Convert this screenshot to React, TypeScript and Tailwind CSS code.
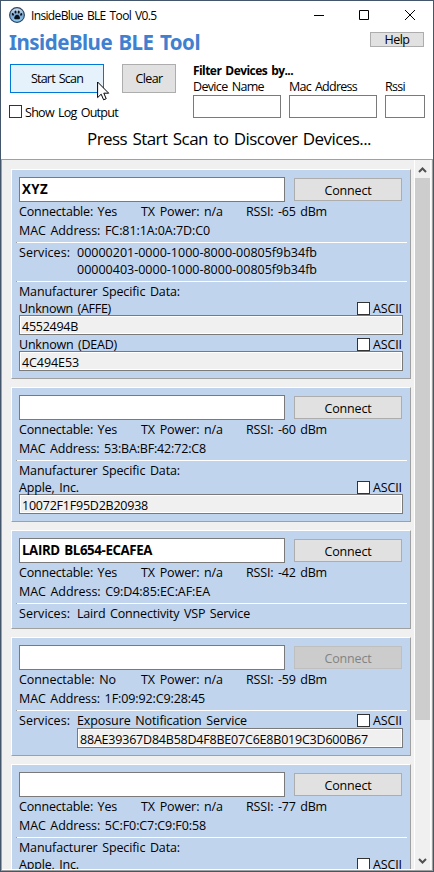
import { useLayoutEffect, useRef, useState } from "react";
import type { ReactNode } from "react";

/** Single line of text tracked so that it spans exactly `w` pixels. */
function Fit({ w, children, className = "" }: { w: number; children: string; className?: string }) {
  const ref = useRef<HTMLSpanElement>(null);
  const [spacing, setSpacing] = useState(0);
  useLayoutEffect(() => {
    const natural = ref.current!.getBoundingClientRect().width;
    setSpacing((w - natural) / children.length);
  }, [w, children]);
  return (
    <span ref={ref} style={{ letterSpacing: `${spacing}px` }} className={`inline-block shrink-0 whitespace-pre [word-spacing:1.5px] ${className}`}>
      {children}
    </span>
  );
}

function Check() {
  return <span className="block size-[13px] shrink-0 border border-[#333] bg-white" />;
}

function Separator() {
  return (
    <div className="mt-[3px] mb-px ml-[-3px] flex h-px w-[391px] bg-white">
      <span className="w-px bg-[#a0a0a0]" />
    </div>
  );
}

function Ascii() {
  return (
    <div className="flex w-[46px] shrink-0 gap-[3px] pt-[2px]">
      <Check />
      <Fit w={29} className="-mt-[2px]">ASCII</Fit>
    </div>
  );
}

function Field({ value, w, className = "" }: { value: string; w: number; className?: string }) {
  return (
    <div className={`mb-px h-5 border border-[#7a7a7a] bg-[#f0f0f0] pl-[2px] leading-[21px] shadow-[inset_0_0_0_1px_#fff] ${className}`}>
      <Fit w={w}>{value}</Fit>
    </div>
  );
}

type CardProps = {
  name?: string;
  nameW?: number;
  yes?: boolean;
  rssi: string;
  mac: string;
  macW: number;
  children: ReactNode;
};

function Card({ name, nameW = 0, yes = true, rssi, mac, macW, children }: CardProps) {
  return (
    <section className="mb-2 w-[400px] shrink-0 border border-t-white border-r-[#a0a0a0] border-b-[#a0a0a0] border-l-white bg-[#c0d4ed] px-[7px] pt-[7px] pb-[6px] leading-[17px]">
      <div className="flex gap-[9px]">
        <div className="h-[25px] w-[266px] border border-[#7a7a7a] bg-white pl-[2px] text-[13.3px] leading-[23px] font-bold">
          {name && <Fit w={nameW}>{name}</Fit>}
        </div>
        <button
          className={
            yes
              ? "mt-px h-[23px] w-[108px] border border-[#adadad] bg-[#e1e1e1] leading-[23px]"
              : "mt-px h-[23px] w-[108px] border border-[#bfbfbf] bg-[#cccccc] leading-[23px] text-[#838383]"
          }
        >
          <Fit w={47}>Connect</Fit>
        </button>
      </div>
      <div className="mt-px flex h-[19px]">
        <div className="w-[122px]">
          <Fit w={yes ? 98 : 97}>{yes ? "Connectable: Yes" : "Connectable: No"}</Fit>
        </div>
        <div className="w-[105px]">
          <Fit w={82}>TX Power: n/a</Fit>
        </div>
        <Fit w={81}>{`RSSI: ${rssi} dBm`}</Fit>
      </div>
      <div className="h-[17px]">
        <Fit w={macW}>{`MAC Address: ${mac}`}</Fit>
      </div>
      {children}
    </section>
  );
}

function Service({ label, w }: { label: string; w: number }) {
  return <div className="h-[17px]"><Fit w={w}>{label}</Fit></div>;
}

function Services({ children }: { children: ReactNode }) {
  return (
    <>
      <Separator />
      <div className="flex">
        <div className="w-[58px] shrink-0"><Fit w={51}>Services:</Fit></div>
        <div className="grow">{children}</div>
      </div>
    </>
  );
}

function Maker({ label, w, value, valueW }: { label: string; w: number; value?: string; valueW?: number }) {
  return (
    <>
      <div className="flex h-[15px] justify-between">
        <Fit w={w}>{label}</Fit>
        <Ascii />
      </div>
      {value && <Field value={value} w={valueW ?? 0} />}
    </>
  );
}

function Manufacturer({ children }: { children: ReactNode }) {
  return (
    <>
      <Separator />
      <div className="h-[17px]"><Fit w={161}>Manufacturer Specific Data:</Fit></div>
      {children}
    </>
  );
}

function Filter({ label, w, box }: { label: string; w: number; box: string }) {
  return (
    <div className={box}>
      <div className="h-[17px] leading-[17px]"><Fit w={w}>{label}</Fit></div>
      <div className="h-[23px] border border-[#7a7a7a] bg-white" />
    </div>
  );
}

function Paw() {
  return (
    <svg width="16" height="16" viewBox="0 0 16 16">
      <defs>
        <linearGradient id="orb" x1="0" y1="0" x2="0" y2="1">
          <stop offset="0" stopColor="#dfe8f2" />
          <stop offset=".5" stopColor="#7ba6cf" />
          <stop offset="1" stopColor="#8fd0f8" />
        </linearGradient>
      </defs>
      <circle cx="8" cy="8" r="7.4" fill="url(#orb)" stroke="#2c4260" strokeWidth="1.1" />
      <g fill="#0b1119">
        <ellipse cx="3.9" cy="7.3" rx="1" ry="1.4" transform="rotate(-25 3.9 7.3)" />
        <ellipse cx="6.5" cy="5" rx="1" ry="1.6" />
        <ellipse cx="9.7" cy="5" rx="1" ry="1.6" />
        <ellipse cx="12.2" cy="7.4" rx="1" ry="1.4" transform="rotate(25 12.2 7.4)" />
        <path d="M8.1 7.7c1.6 0 3.1 2.2 2.9 3.6-.2 1.3-1.7.9-2.9.9s-2.7.4-2.9-.9c-.2-1.4 1.3-3.6 2.9-3.6Z" />
      </g>
    </svg>
  );
}

export default function App() {
  return (
    <div className="relative flex h-[872px] w-[434px] flex-col overflow-hidden border border-[#44566b] bg-white font-['Open_Sans','Noto_Sans',sans-serif] text-[12.5px] text-black">
      <header className="h-[158px] shrink-0">
        <div className="flex h-[29px] pt-[6px] pl-2">
          <Paw />
          <div className="ml-[6px] w-[283px] text-[12px] leading-[17px]"><Fit w={125.5}>InsideBlue BLE Tool V0.5</Fit></div>
          <svg width="103" height="16" viewBox="0 0 103 16" fill="none" stroke="#000" className="shrink-0">
            <path d="M0 8.5h10M45.5 3.5h9v9h-9z" />
            <path d="m91 3 10 10M101 3 91 13" />
          </svg>
        </div>
        <div className="flex h-[33px] justify-between pr-[9px] pl-[8px]">
          <h1 className="font-['Noto_Sans',sans-serif] text-[20.5px] leading-[24px] font-bold text-[#4080d0]">
            <Fit w={191}>InsideBlue BLE Tool</Fit>
          </h1>
          <button className="mt-[2px] h-[15px] w-[54px] border border-[#adadad] bg-[#e1e1e1] leading-[13px]"><Fit w={25}>Help</Fit></button>
        </div>
        <div className="flex h-[63px] pl-[9px]">
          <div className="w-[183px]">
            <div className="flex gap-[18px] pt-px">
              <button className="h-[29px] w-[94px] border border-[#0078d7] bg-[#e5f1fb] leading-[28px]"><Fit w={52}>Start Scan</Fit></button>
              <button className="h-[29px] w-[54px] border border-[#adadad] bg-[#e1e1e1] leading-[28px]"><Fit w={27}>Clear</Fit></button>
            </div>
            <div className="mt-[12px] -ml-px flex gap-[3px]">
              <Check />
              <Fit w={93} className="-mt-px leading-[18px]">Show Log Output</Fit>
            </div>
          </div>
          <div>
            <div className="h-[15px] text-[12px] leading-[15px] font-bold"><Fit w={100}>Filter Devices by...</Fit></div>
            <div className="flex gap-2">
              <Filter label="Device Name" w={71} box="w-[88px]" />
              <Filter label="Mac Address" w={68} box="w-[88px]" />
              <Filter label="Rssi" w={20} box="w-[40px]" />
            </div>
          </div>
        </div>
        <div className="pl-[86px] text-[17px] leading-[25px]"><Fit w={284}>Press Start Scan to Discover Devices...</Fit></div>
      </header>

      <main className="flex h-[712px] border border-[#a0a0a0] bg-[#f0f0f0]">
        <div className="flex h-[710px] w-[412px] shrink-0 flex-col overflow-hidden border-b border-white pt-[9px] pl-[9px]">
          <Card name="XYZ" nameW={26} rssi="-65" mac="FC:81:1A:0A:7D:C0" macW={191}>
            <Services>
              <Service label="00000201-0000-1000-8000-00805f9b34fb" w={240} />
              <Service label="00000403-0000-1000-8000-00805f9b34fb" w={240} />
            </Services>
            <Manufacturer>
              <Maker label="Unknown (AFFE)" w={92} value="4552494B" valueW={56} />
              <Maker label="Unknown (DEAD)" w={98} value="4C494E53" valueW={57} />
            </Manufacturer>
          </Card>
          <Card rssi="-60" mac="53:BA:BF:42:72:C8" macW={187}>
            <Manufacturer>
              <Maker label="Apple, Inc." w={60} value="10072F1F95D2B20938" valueW={126} />
            </Manufacturer>
          </Card>
          <Card name="LAIRD BL654-ECAFEA" nameW={130} rssi="-42" mac="C9:D4:85:EC:AF:EA" macW={191}>
            <Services>
              <Service label="Laird Connectivity VSP Service" w={173} />
            </Services>
          </Card>
          <Card yes={false} rssi="-59" mac="1F:09:92:C9:28:45" macW={186}>
            <Services>
              <div className="flex h-4 justify-between">
                <Fit w={170}>Exposure Notification Service</Fit>
                <Ascii />
              </div>
              <Field value="88AE39367D84B58D4F8BE07C6E8B019C3D600B67" w={288} />
            </Services>
          </Card>
          <Card rssi="-77" mac="5C:F0:C7:C9:F0:58" macW={187}>
            <Manufacturer>
              <Maker label="Apple, Inc." w={60} />
            </Manufacturer>
          </Card>
        </div>
        <div className="flex w-[17px] shrink-0 flex-col border-x border-white">
          <svg width="15" height="18" viewBox="0 0 15 18" fill="none" stroke="#505050" strokeWidth="2" className="shrink-0"><path d="m4 12 3.5-3.5L11 12" /></svg>
          <div className="h-[542px] shrink-0 bg-[#cdcdcd]" />
          <div className="grow" />
          <svg width="15" height="17" viewBox="0 0 15 17" fill="none" stroke="#505050" strokeWidth="2" className="shrink-0"><path d="M4 6 7.5 9.5 11 6" /></svg>
        </div>
      </main>

      <svg className="absolute top-[80px] left-[96px]" width="13" height="20" viewBox="0 0 13 20">
        <path d="M.6 1v15.6l3.6-3.4 2.4 5.6 2.6-1.1-2.4-5.5h4.9Z" fill="#fff" stroke="#000" strokeWidth="1" />
      </svg>
    </div>
  );
}
